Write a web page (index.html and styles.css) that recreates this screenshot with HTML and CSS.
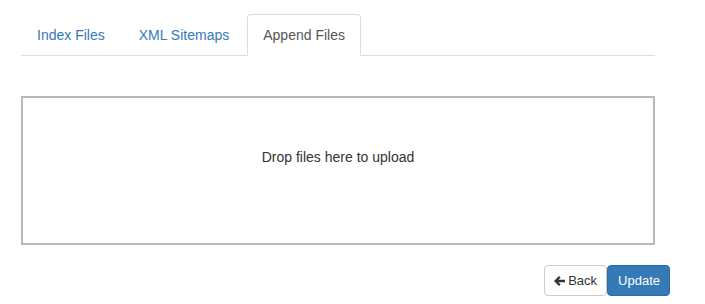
FILE: index.html
```html
<!DOCTYPE html>
<html>
<head>
	<title>Sitemap Files</title>
	<meta charset="utf-8">
<link rel="stylesheet" href="styles.css">
</head>
<body>
<div class="pagina">
	<ul class="abas">
		<li class="aba"><a href="#">Index Files</a></li>
		<li class="aba"><a href="#">XML Sitemaps</a></li>
		<li class="aba ativa"><a href="#">Append Files</a></li>
	</ul>

	<div class="dropzone">
		<div class="dzmsg">Drop files here to upload</div>
	</div>

	<div class="acoes">
		<button class="btn btnVoltar"><svg class="seta" width="11" height="10" viewBox="0 0 11 10"><path d="M0 5 L5 0 L6.6 1.6 L4.4 3.8 L11 3.8 L11 6.2 L4.4 6.2 L6.6 8.4 L5 10 Z" fill="#333"/></svg>Back</button><button class="btn btnAtualizar">Update</button>
	</div>
</div>
</body>
</html>
```

FILE: styles.css
```css
	body{
		margin:0;
		font-family: "Liberation Sans", Arial, sans-serif;
		font-size:14px;
		color:#333;
		background:#fff;
	}
	.pagina{
		padding:14px 35px 0 21px;
	}
	.abas{
		display:flex;
		list-style:none;
		margin:0 15px 0 0;
		padding:0;
		border-bottom:1px solid #ddd;
	}
	.aba{
		margin-right:2px;
		margin-bottom:-1px;
	}
	.aba a{
		display:block;
		padding:10px 15px;
		line-height:20px;
		border:1px solid transparent;
		border-radius:4px 4px 0 0;
		color:#337ab7;
		text-decoration:none;
	}
	.ativa a{
		color:#555;
		background:#fff;
		border-color:#ddd #ddd transparent #ddd;
	}
	.dropzone{
		margin:40px 15px 0 0;
		height:149px;
		box-sizing:border-box;
		border:2px solid #b8b8b8;
		padding:49px 20px 0 20px;
		text-align:center;
	}
	.dzmsg{
		line-height:20px;
		color:#333;
	}
	.acoes{
		display:flex;
		justify-content:flex-end;
		margin-top:20px;
	}
	.btn{
		font-family: "Liberation Sans", Arial, sans-serif;
		font-size:13px;
		line-height:19px;
		padding:5px 9px;
		border:1px solid #ccc;
		border-radius:4px;
		background:#fff;
		color:#333;
		display:flex;
		align-items:center;
	}
	.seta{
		margin-right:3px;
	}
	.btnAtualizar{
		background:#337ab7;
		border-color:#2e6da4;
		color:#fff;
		padding:5px 9px 5px 10px;
	}
```
